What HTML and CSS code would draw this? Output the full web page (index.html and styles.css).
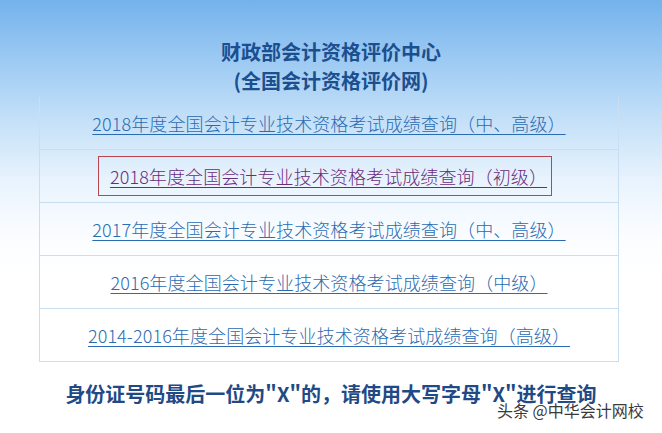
FILE: index.html
```
<!DOCTYPE html>
<html lang="zh-CN">
<head>
<meta charset="utf-8">
<title>财政部会计资格评价中心</title>
<link rel="stylesheet" href="styles.css">
</head>
<body>
<div class="page">
  <h1 class="title">财政部会计资格评价中心<br>(全国会计资格评价网)</h1>
  <div class="list">
    <div class="row"><a class="link" href="#">2018年度全国会计专业技术资格考试成绩查询（中、高级）</a></div>
    <div class="row"><a class="link visited boxed" href="#">2018年度全国会计专业技术资格考试成绩查询（初级）</a></div>
    <div class="row"><a class="link" href="#">2017年度全国会计专业技术资格考试成绩查询（中、高级）</a></div>
    <div class="row"><a class="link" href="#">2016年度全国会计专业技术资格考试成绩查询（中级）</a></div>
    <div class="row last"><a class="link" href="#">2014-2016年度全国会计专业技术资格考试成绩查询（高级）</a></div>
  </div>
  <p class="note">身份证号码最后一位为"X"的，请使用大写字母"X"进行查询</p>
  <div class="watermark">头条 @中华会计网校</div>
</div>
</body>
</html>
```
FILE: styles.css
```
html, body {
  margin: 0;
  padding: 0;
}
body {
  width: 662px;
  height: 433px;
  overflow: hidden;
  background: linear-gradient(to bottom, #74b2ec 0px, #9ccaf3 60px, #c4e0f8 120px, #e8f3fd 180px, #f9fcff 230px, #ffffff 270px);
  font-family: "Noto Sans CJK SC", "Noto Sans", sans-serif;
}
.page {
  position: relative;
  width: 662px;
  height: 433px;
}
.title {
  margin: 0;
  padding-top: 37px;
  text-align: center;
  font-size: 20px;
  line-height: 29px;
  font-weight: 700;
  color: #1c4f8f;
}
.list {
  margin: 2px 0 0 39px;
  width: 578px;
  border-left: 1px solid #c9def1;
  border-right: 1px solid #c9def1;
  border-bottom: 1px solid #c9def1;
}
.row {
  height: 52px;
  border-bottom: 1px solid #c9def1;
  display: flex;
  align-items: center;
  justify-content: center;
}
.row.last {
  border-bottom: none;
}
.link {
  font-size: 18px;
  font-weight: 300;
  color: #2a6bb2;
  text-decoration: underline;
  text-underline-offset: 3px;
  line-height: 24px;
  letter-spacing: 0.1px;
}
.link.visited {
  color: #6b2c7c;
}
.boxed {
  display: inline-block;
  border: 1px solid #b8454f;
  padding: 7px 4px 7px 11px;
  margin-right: 8px;
}
.note {
  margin: 18px 0 0 0;
  text-align: center;
  font-size: 20px;
  line-height: 28px;
  font-weight: 700;
  color: #1f4a86;
}
.watermark {
  position: absolute;
  left: 497px;
  top: 399px;
  font-size: 16px;
  line-height: 22px;
  color: #3a3a3a;
  text-shadow: 0 0 1px #fff, 0 0 2px #fff;
}
```
